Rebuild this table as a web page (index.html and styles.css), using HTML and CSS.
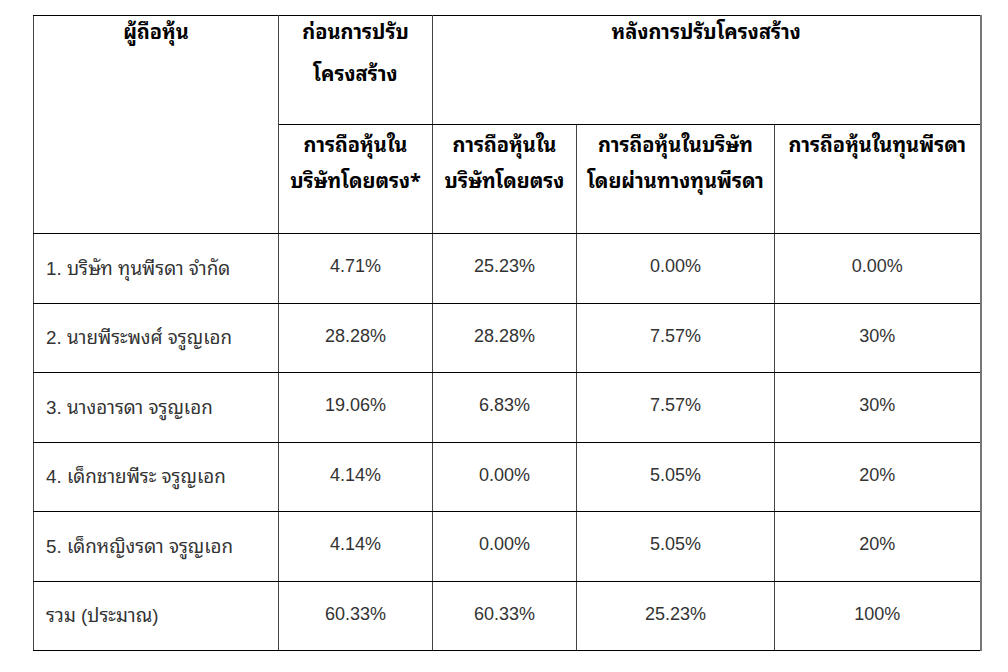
FILE: index.html
```html
<!DOCTYPE html>
<html lang="th">
<head>
<meta charset="utf-8">
<title>ผู้ถือหุ้น</title>
<link rel="stylesheet" href="styles.css">
</head>
<body>
<div class="page">
<table class="shares">
  <colgroup>
    <col class="c1"><col class="c2"><col class="c3"><col class="c4"><col class="c5">
  </colgroup>
  <thead>
    <tr class="h1">
      <th rowspan="2"><span class="ln">ผู้ถือหุ้น</span></th>
      <th><span class="ln">ก่อนการปรับ</span><span class="ln">โครงสร้าง</span></th>
      <th colspan="3"><span class="ln">หลังการปรับโครงสร้าง</span></th>
    </tr>
    <tr class="h2">
      <th><span class="ln">การถือหุ้นใน</span><span class="ln">บริษัทโดยตรง*</span></th>
      <th><span class="ln">การถือหุ้นใน</span><span class="ln">บริษัทโดยตรง</span></th>
      <th><span class="ln">การถือหุ้นในบริษัท</span><span class="ln">โดยผ่านทางทุนพีรดา</span></th>
      <th><span class="ln">การถือหุ้นในทุนพีรดา</span></th>
    </tr>
  </thead>
  <tbody>
    <tr><td class="name">1. บริษัท ทุนพีรดา จำกัด</td><td>4.71%</td><td>25.23%</td><td>0.00%</td><td>0.00%</td></tr>
    <tr><td class="name">2. นายพีระพงศ์ จรูญเอก</td><td>28.28%</td><td>28.28%</td><td>7.57%</td><td>30%</td></tr>
    <tr><td class="name">3. นางอารดา จรูญเอก</td><td>19.06%</td><td>6.83%</td><td>7.57%</td><td>30%</td></tr>
    <tr><td class="name">4. เด็กชายพีระ จรูญเอก</td><td>4.14%</td><td>0.00%</td><td>5.05%</td><td>20%</td></tr>
    <tr><td class="name">5. เด็กหญิงรดา จรูญเอก</td><td>4.14%</td><td>0.00%</td><td>5.05%</td><td>20%</td></tr>
    <tr><td class="name">รวม (ประมาณ)</td><td>60.33%</td><td>60.33%</td><td>25.23%</td><td>100%</td></tr>
  </tbody>
</table>
</div>
</body>
</html>
```

FILE: styles.css
```css
html, body {
  margin: 0;
  padding: 0;
  background: #ffffff;
}

.page {
  padding: 15px 0 0 33px;
}

.shares {
  border-collapse: collapse;
  table-layout: fixed;
  width: 948px;
  font-family: "Liberation Sans", "Noto Sans Thai Looped", Loma, sans-serif;
  font-size: 18px;
  color: #333333;
}

.c1 { width: 245px; }
.c2 { width: 154px; }
.c3 { width: 144px; }
.c4 { width: 198px; }
.c5 { width: 206px; }

.shares th,
.shares td {
  border-top: 1px solid #000000;
  border-bottom: 1px solid #000000;
  border-left: 1px solid #444444;
  border-right: 1px solid #444444;
  padding: 0;
}

.shares th:last-child,
.shares td:last-child {
  border-right: 2px solid #777777;
}

.shares th {
  color: #000000;
  font-weight: bold;
  font-size: 20px;
  font-family: "Noto Sans Thai Looped", Loma, "Liberation Sans", sans-serif;
  vertical-align: top;
  text-align: center;
  height: 108px;
}

.shares th .ln {
  display: block;
  white-space: nowrap;
}

.shares .h1 th .ln {
  line-height: 28px;
}

.shares .h1 th .ln + .ln {
  margin-top: 14px;
}

.shares .h2 th .ln {
  line-height: 36px;
}

.shares td {
  height: 65.5px;
  text-align: center;
  vertical-align: middle;
  padding-bottom: 3px;
}

.shares td.name {
  text-align: left;
  padding-left: 12px;
  font-size: 18.8px;
}
```
